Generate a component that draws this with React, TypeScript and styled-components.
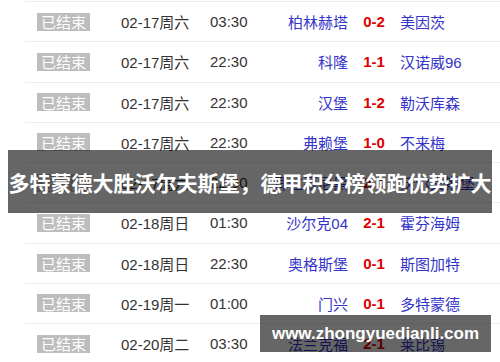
import React from "react";
import styled, { createGlobalStyle } from "styled-components";

const GlobalStyle = createGlobalStyle`
  html, body {
    margin: 0;
    padding: 0;
    background: #fff;
    overflow: hidden;
  }
  body {
    font-family: "Liberation Sans", "Noto Sans CJK SC", sans-serif;
  }
`;

type Match = {
  date: string;
  time: string;
  home: string;
  score: string;
  away: string;
};

const matches: Match[] = [
  { date: "02-17周六", time: "03:30", home: "柏林赫塔", score: "0-2", away: "美因茨" },
  { date: "02-17周六", time: "22:30", home: "科隆", score: "1-1", away: "汉诺威96" },
  { date: "02-17周六", time: "22:30", home: "汉堡", score: "1-2", away: "勒沃库森" },
  { date: "02-17周六", time: "22:30", home: "弗赖堡", score: "1-0", away: "不来梅" },
  { date: "02-17周六", time: "22:30", home: "拜仁慕尼黑", score: "2-1", away: "沃尔夫斯堡" },
  { date: "02-18周日", time: "01:30", home: "沙尔克04", score: "2-1", away: "霍芬海姆" },
  { date: "02-18周日", time: "22:30", home: "奥格斯堡", score: "0-1", away: "斯图加特" },
  { date: "02-19周一", time: "01:00", home: "门兴", score: "0-1", away: "多特蒙德" },
  { date: "02-20周二", time: "03:30", home: "法兰克福", score: "2-1", away: "莱比锡" },
];

const Page = styled.div`
  position: relative;
  width: 500px;
  height: 362px;
  overflow: hidden;
`;

const Table = styled.div`
  margin-top: 1px;
  margin-left: 25px;
  display: flex;
  flex-direction: column;
`;

const Row = styled.div`
  display: grid;
  grid-template-columns: 84px 89px 60px 78px 52px 1fr;
  align-items: center;
  height: 39.25px;
  padding-left: 12px;
  border-top: 1px solid #eeeeee;
  font-size: 15px;
`;

const Badge = styled.span`
  justify-self: start;
  display: inline-flex;
  align-items: center;
  background: #bdbdbd;
  color: #fff;
  font-family: "Noto Sans CJK SC", sans-serif;
  font-size: 15px;
  line-height: 1;
  height: 18px;
  padding: 0 4px;
`;

const Cell = styled.span<{ $align?: "left" | "right" | "center" }>`
  color: #333;
  white-space: nowrap;
  text-align: ${(p) => p.$align || "left"};
`;

const Team = styled(Cell)`
  color: #3434c8;
`;

const Score = styled(Cell)`
  color: #e00000;
  font-weight: bold;
`;

const Headline = styled.div`
  position: absolute;
  left: 8px;
  top: 150px;
  width: 484px;
  height: 63px;
  background: rgba(0, 0, 0, 0.6);
  display: flex;
  align-items: center;
  justify-content: center;
  color: #fff;
  font-family: "Noto Sans CJK SC", sans-serif;
  font-weight: bold;
  font-size: 21px;
  white-space: nowrap;
`;

const Watermark = styled.div`
  position: absolute;
  left: 260px;
  top: 315px;
  width: 231px;
  height: 37px;
  background: rgba(0, 0, 0, 0.6);
  display: flex;
  align-items: center;
  justify-content: center;
  color: #fff;
  font-family: "Liberation Sans", sans-serif;
  font-weight: bold;
  font-size: 17px;
`;

export default function App() {
  return (
    <Page>
      <GlobalStyle />
      <Table>
        {matches.map((m, i) => (
          <Row key={i}>
            <Badge>已结束</Badge>
            <Cell>{m.date}</Cell>
            <Cell>{m.time}</Cell>
            <Team $align="right">{m.home}</Team>
            <Score $align="center">{m.score}</Score>
            <Team>{m.away}</Team>
          </Row>
        ))}
      </Table>
      <Headline>多特蒙德大胜沃尔夫斯堡，德甲积分榜领跑优势扩大</Headline>
      <Watermark>www.zhongyuedianli.com</Watermark>
    </Page>
  );
}
